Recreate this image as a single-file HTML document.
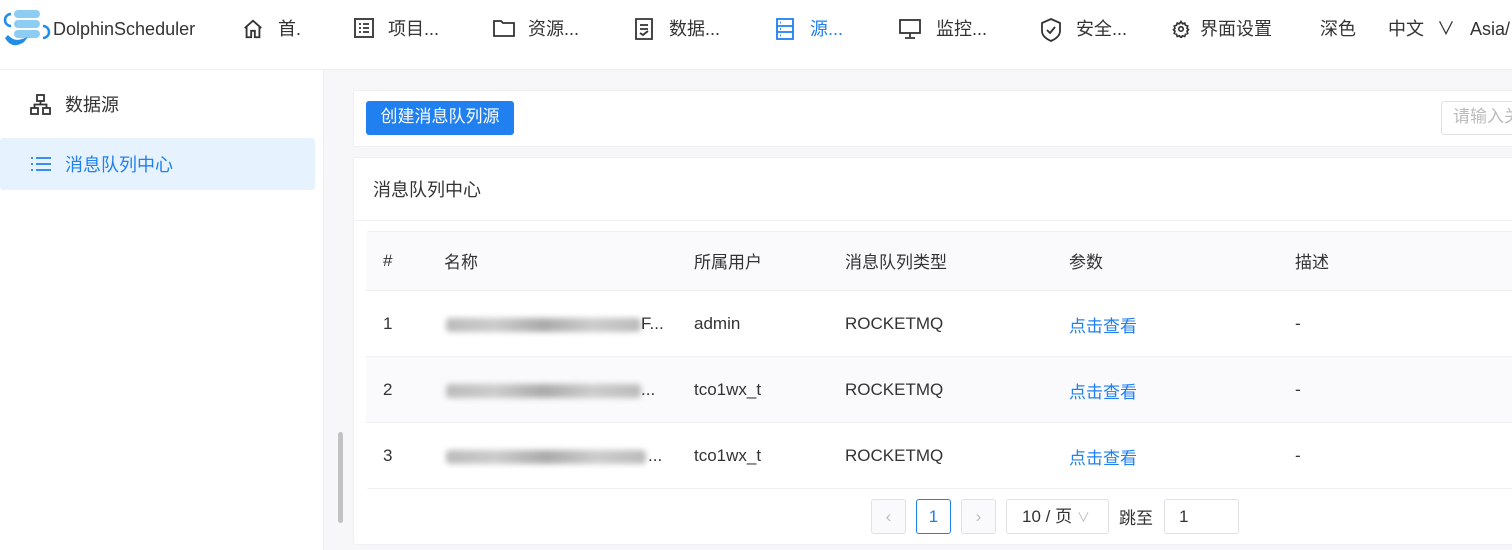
<!DOCTYPE html>
<html><head><meta charset="utf-8"><style>
*{box-sizing:border-box;margin:0;padding:0}
body{width:1512px;height:550px;overflow:hidden;font-family:"Liberation Sans","Noto Sans CJK SC",sans-serif;font-size:17px;color:#333;background:#f7f7fa;position:relative}
.hdr{position:absolute;left:0;top:0;width:1512px;height:70px;background:#fff;border-bottom:1px solid #efeff5}
.hi{position:absolute;top:16px;height:26px;line-height:26px;font-size:18px;color:#333;white-space:nowrap}
.hi svg{position:absolute;top:2px}
.side{position:absolute;left:0;top:70px;width:324px;height:480px;background:#fff;border-right:1px solid #efeff5}
.card{position:absolute;background:#fff;border:1px solid #efeff5;border-radius:3px}
.abs{position:absolute;white-space:nowrap}
.row{position:absolute;left:366px;width:1146px;border-bottom:1px solid #efeff5}
.blue{color:#2080f0}
.blur{position:absolute;height:14px;background:linear-gradient(90deg,#bbb,#ccc,#aaa,#ccc,#bbb);filter:blur(3px);border-radius:4px}
.pb{position:absolute;top:499px;height:35px;border:1px solid #e0e0e6;border-radius:3px;background:#fff;text-align:center;line-height:33px}
</style></head><body>
<div class="hdr">
  <svg class="abs" style="left:2px;top:10px" width="50" height="40" viewBox="0 0 50 40">
    <rect x="12" y="0" width="26" height="8" rx="4" fill="#8ecdf3"/>
    <rect x="12" y="10" width="26" height="8" rx="4" fill="#8ecdf3"/>
    <rect x="12" y="20" width="26" height="8" rx="4" fill="#8ecdf3"/>
    <path d="M9 4 A6 6 0 0 0 9 16" stroke="#1f8ee8" stroke-width="2.5" fill="none"/>
    <path d="M41 16 A6 6 0 0 1 41 28" stroke="#1f8ee8" stroke-width="2.5" fill="none"/>
    <path d="M3 28 Q10 40 22 32 L26 27 L20 29 Q12 32 6 25 Z" fill="#1f8ee8"/>
  </svg>
  <div class="hi" style="left:53px;font-size:18px">DolphinScheduler</div>
  <div class="hi" style="left:242px"><svg width="22" height="22" viewBox="0 0 24 24" fill="none" stroke="#333" stroke-width="2"><path d="M3 11 L12 3 L21 11 M5 9 V21 H10 V14 H14 V21 H19 V9"/></svg><span style="margin-left:36px">首.</span></div>
  <div class="hi" style="left:354px"><svg width="20" height="20" viewBox="0 0 20 20" fill="none" stroke="#333" stroke-width="1.8"><rect x="1" y="1" width="18" height="18"/><path d="M5 6h2M9 6h6M5 10h2M9 10h6M5 14h2M9 14h6"/></svg><span style="margin-left:34px">项目...</span></div>
  <div class="hi" style="left:493px"><svg width="22" height="20" viewBox="0 0 22 20" fill="none" stroke="#333" stroke-width="1.8"><path d="M1 3h7l2 2h11v13H1z"/></svg><span style="margin-left:35px">资源...</span></div>
  <div class="hi" style="left:635px"><svg width="18" height="22" viewBox="0 0 18 22" fill="none" stroke="#333" stroke-width="1.8"><path d="M1 1h16v20H1z M5 7h8M5 11h8M5 15l3 2 5-4"/></svg><span style="margin-left:34px">数据...</span></div>
  <div class="hi" style="left:776px;color:#2080f0"><svg width="18" height="22" viewBox="0 0 18 22" fill="none" stroke="#2080f0" stroke-width="1.8"><rect x="1" y="1" width="16" height="20"/><path d="M1 8h16M1 14h16"/><path d="M4 4.5h1M4 11h1M4 17.5h1"/></svg><span style="margin-left:34px">源...</span></div>
  <div class="hi" style="left:898px"><svg width="24" height="22" viewBox="0 0 24 22" fill="none" stroke="#333" stroke-width="1.8"><rect x="2" y="2" width="20" height="13"/><path d="M12 15v4M7 20h10"/></svg><span style="margin-left:38px">监控...</span></div>
  <div class="hi" style="left:1041px"><svg width="20" height="24" viewBox="0 0 20 24" fill="none" stroke="#333" stroke-width="1.8"><path d="M10 1 L19 5 V13 Q19 19 10 23 Q1 19 1 13 V5 Z M6 12l3 3 5-6"/></svg><span style="margin-left:35px">安全...</span></div>
  <div class="hi" style="left:1172px"><svg width="18" height="18" viewBox="0 0 24 24" fill="none" stroke="#333" stroke-width="2.2" style="top:4px"><circle cx="12" cy="12" r="3"/><path d="M12 2l2 3 3-1 1 3 3 1-1 3 2 2-2 2 1 3-3 1-1 3-3-1-2 3-2-3-3 1-1-3-3-1 1-3-2-2 2-2-1-3 3-1 1-3 3 1z"/></svg><span style="margin-left:28px">界面设置</span></div>
  <div class="hi" style="left:1320px">深色</div>
  <div class="hi" style="left:1388px">中文 <span style="margin-left:8px">∨</span></div>
  <div class="hi" style="left:1470px">Asia/</div>
</div>
<div class="side">
  <svg class="abs" style="left:30px;top:24px" width="21" height="21" viewBox="0 0 21 21" fill="none" stroke="#333" stroke-width="1.8"><rect x="7" y="1" width="7" height="6"/><rect x="1" y="14" width="7" height="6"/><rect x="13" y="14" width="7" height="6"/><path d="M10.5 7v3.5M4.5 14v-3.5h12V14"/></svg>
  <div class="abs" style="left:65px;top:21px;font-size:18px">数据源</div>
  <div class="abs" style="left:0;top:68px;width:315px;height:52px;background:#e6f2fd;border-radius:3px"></div>
  <svg class="abs" style="left:30px;top:86px" width="21" height="16" viewBox="0 0 21 16" stroke="#2080f0" stroke-width="1.8"><path d="M1 2h2M1 8h2M1 14h2M6 2h15M6 8h15M6 14h15"/></svg>
  <div class="abs blue" style="left:65px;top:81px;font-size:18px">消息队列中心</div>
</div>
<div class="abs" style="left:338px;top:432px;width:5px;height:91px;background:#c2c2c2;border-radius:3px"></div>
<div class="card" style="left:353px;top:90px;width:1170px;height:57px"></div>
<div class="abs" style="left:366px;top:101px;width:148px;height:34px;background:#2080f0;border-radius:3px;color:#fff;font-size:17px;line-height:32px;text-align:center">创建消息队列源</div>
<div class="abs" style="left:1441px;top:101px;width:90px;height:34px;border:1px solid #e0e0e6;border-radius:3px;color:#bbb;line-height:30px;padding-left:11px">请输入关</div>
<div class="card" style="left:353px;top:157px;width:1170px;height:388px"></div>
<div class="abs" style="left:373px;top:176px;font-size:18px">消息队列中心</div>
<div class="abs" style="left:354px;top:220px;width:1160px;height:1px;background:#efeff5"></div>
<div class="abs" style="left:366px;top:231px;width:1150px;height:258px;border:1px solid #efeff5;border-radius:3px"></div>
<div class="row" style="top:232px;height:59px;background:#fafafc"></div>
<div class="row" style="top:291px;height:66px;background:#fff"></div>
<div class="row" style="top:357px;height:66px;background:#fafafc"></div>
<div class="row" style="top:423px;height:65px;background:#fff;border-bottom:none"></div>
<div class="abs" style="left:383px;top:251px">#</div>
<div class="abs" style="left:444px;top:248px">名称</div>
<div class="abs" style="left:694px;top:248px">所属用户</div>
<div class="abs" style="left:845px;top:248px">消息队列类型</div>
<div class="abs" style="left:1069px;top:248px">参数</div>
<div class="abs" style="left:1295px;top:248px">描述</div>

<div class="abs" style="left:383px;top:314px">1</div>
<div class="blur" style="left:446px;top:318px;width:195px"></div><div class="abs" style="left:641px;top:314px">F...</div>
<div class="abs" style="left:694px;top:314px">admin</div>
<div class="abs" style="left:845px;top:314px">ROCKETMQ</div>
<div class="abs blue" style="left:1069px;top:312px">点击查看</div>
<div class="abs" style="left:1295px;top:314px">-</div>

<div class="abs" style="left:383px;top:380px">2</div>
<div class="blur" style="left:446px;top:384px;width:195px"></div><div class="abs" style="left:641px;top:380px">...</div>
<div class="abs" style="left:694px;top:380px">tco1wx_t</div>
<div class="abs" style="left:845px;top:380px">ROCKETMQ</div>
<div class="abs blue" style="left:1069px;top:378px">点击查看</div>
<div class="abs" style="left:1295px;top:380px">-</div>

<div class="abs" style="left:383px;top:446px">3</div>
<div class="blur" style="left:446px;top:450px;width:200px"></div><div class="abs" style="left:648px;top:446px">...</div>
<div class="abs" style="left:694px;top:446px">tco1wx_t</div>
<div class="abs" style="left:845px;top:446px">ROCKETMQ</div>
<div class="abs blue" style="left:1069px;top:444px">点击查看</div>
<div class="abs" style="left:1295px;top:446px">-</div>

<div class="pb" style="left:871px;width:35px;background:#fafafc;color:#bbb">‹</div>
<div class="pb" style="left:916px;width:35px;border-color:#2080f0;color:#2080f0">1</div>
<div class="pb" style="left:961px;width:35px;background:#fafafc;color:#bbb">›</div>
<div class="pb" style="left:1006px;width:103px;text-align:left;padding-left:15px">10 / 页 <span style="color:#bbb;font-size:13px">∨</span></div>
<div class="abs" style="left:1119px;top:504px">跳至</div>
<div class="pb" style="left:1164px;width:75px;text-align:left;padding-left:14px">1</div>
</body></html>
